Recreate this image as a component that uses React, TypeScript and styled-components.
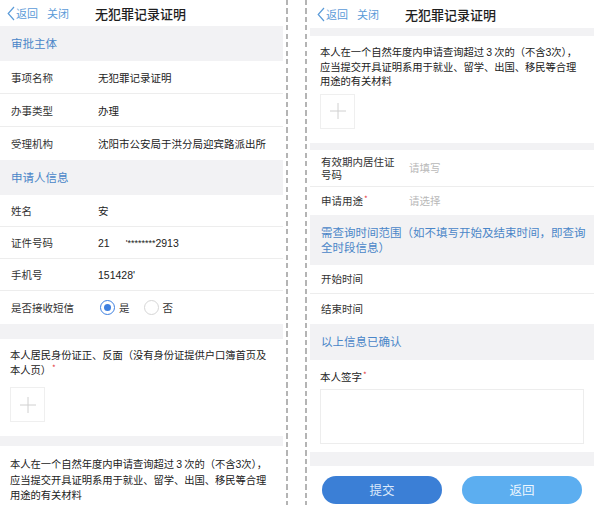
import React from "react";
import styled, { createGlobalStyle } from "styled-components";

const GlobalStyle = createGlobalStyle`
    html, body {
        margin: 0;
        padding: 0;
        background: #fff;
        overflow: hidden;
    }
    body {
        font-family: "Noto Sans CJK SC", "Noto Sans", sans-serif;
        color: #333;
    }
    * {
        box-sizing: border-box;
    }
`;

const grey = "#f2f2f4";
const blue = "#4a86c8";

const Page = styled.div`
    width: 594px;
    height: 505px;
    display: flex;
    overflow: hidden;
`;

const Phone = styled.div<{ $width: number }>`
    width: ${({ $width }) => $width}px;
    flex-shrink: 0;
    display: flex;
    flex-direction: column;
    background: #fff;
`;

const Divider = styled.div`
    width: 27px;
    flex-shrink: 0;
    display: flex;
    justify-content: space-between;
    padding: 0 3px 0 3px;
`;

const DashLine = styled.div`
    width: 2px;
    height: 100%;
    background: repeating-linear-gradient(
        to bottom,
        #b4b4b4 0,
        #b4b4b4 5px,
        transparent 5px,
        transparent 8.5px
    );
`;

const NavBar = styled.div<{ $height: number; $pad: number }>`
    height: ${({ $height }) => $height}px;
    display: flex;
    align-items: center;
    padding-left: ${({ $pad }) => $pad}px;
    flex-shrink: 0;
`;

const NavLink = styled.span`
    font-size: 11px;
    color: #5b9bd8;
    display: flex;
    align-items: center;
`;

const NavTitle = styled.span`
    font-size: 13px;
    color: #1e1e1e;
    font-weight: 500;
`;

const SectionHeader = styled.div<{ $height: number }>`
    height: ${({ $height }) => $height}px;
    background: ${grey};
    color: ${blue};
    font-size: 11.5px;
    line-height: 15px;
    padding: 0 8px 0 11px;
    display: flex;
    align-items: center;
    flex-shrink: 0;
`;

const Spacer = styled.div<{ $height: number }>`
    height: ${({ $height }) => $height}px;
    background: ${grey};
    flex-shrink: 0;
`;

const Row = styled.div<{ $height: number; $last?: boolean }>`
    height: ${({ $height }) => $height}px;
    display: flex;
    align-items: center;
    padding-left: 11px;
    border-bottom: ${({ $last }) => ($last ? "none" : "1px solid #ededed")};
    flex-shrink: 0;
`;

const Label = styled.div<{ $width: number }>`
    width: ${({ $width }) => $width}px;
    flex-shrink: 0;
    font-size: 10.5px;
    line-height: 13px;
    color: #333;
    padding-right: 10px;
`;

const Value = styled.div<{ $placeholder?: boolean }>`
    font-size: 10.5px;
    color: ${({ $placeholder }) => ($placeholder ? "#b9b9b9" : "#222")};
    white-space: nowrap;
    display: flex;
    align-items: center;
`;

const Num = styled.span`
    font-family: "Liberation Sans", Arial, sans-serif;
    font-size: 10.5px;
    color: #222;
`;

const Required = styled.span`
    color: #e4393c;
    font-size: 8px;
    position: relative;
    top: -3px;
    margin-left: 1px;
`;

const Block = styled.div<{ $pt: number; $pb: number }>`
    padding: ${({ $pt, $pb }) => `${$pt}px 10px ${$pb}px 10px`};
    flex-shrink: 0;
`;

const Paragraph = styled.div<{ $lh?: number }>`
    font-size: 10.3px;
    line-height: ${({ $lh }) => $lh ?? 15}px;
    color: #222;
    white-space: nowrap;
    letter-spacing: -0.05px;
`;

const UploadBox = styled.div<{ $mt: number }>`
    width: 35px;
    height: 35px;
    margin-top: ${({ $mt }) => $mt}px;
    border: 1px solid #efefef;
    display: flex;
    align-items: center;
    justify-content: center;
`;

const RadioGroup = styled.div`
    display: flex;
    align-items: center;
    gap: 4px;
`;

const RadioCircle = styled.span<{ $checked?: boolean }>`
    width: 15px;
    height: 15px;
    border-radius: 50%;
    border: 1.5px solid ${({ $checked }) => ($checked ? "#3d7fe0" : "#d6d6d6")};
    display: flex;
    align-items: center;
    justify-content: center;
    margin-left: ${({ $checked }) => ($checked ? "2px" : "10px")};

    &::after {
        content: "";
        width: 7px;
        height: 7px;
        border-radius: 50%;
        background: ${({ $checked }) => ($checked ? "#3d7fe0" : "transparent")};
    }
`;

const RadioText = styled.span`
    font-size: 10.5px;
    color: #333;
`;

const SignLabel = styled.div`
    font-size: 10.5px;
    color: #222;
    line-height: 14px;
`;

const SignBox = styled.div`
    margin-top: 4px;
    height: 55px;
    border: 1px solid #ededed;
`;

const ButtonBar = styled.div`
    display: flex;
    gap: 20px;
    padding: 10px 12px 0 12px;
    flex-shrink: 0;
`;

const Button = styled.div<{ $primary?: boolean }>`
    width: 120px;
    height: 28px;
    border-radius: 14px;
    background: ${({ $primary }) => ($primary ? "#3b7fd6" : "#5caef0")};
    color: ${({ $primary }) => ($primary ? "#dce9fb" : "#eef7ff")};
    font-size: 12.5px;
    display: flex;
    align-items: center;
    justify-content: center;
`;

const Chevron = () => (
    <svg width="8" height="15" viewBox="0 0 8 15" style={{ marginRight: 1 }}>
        <polyline points="7,1 1.2,7.5 7,14" fill="none" stroke="#5b9bd8" strokeWidth="1.2" />
    </svg>
);

const Plus = () => (
    <svg width="16" height="16" viewBox="0 0 16 16">
        <line x1="8" y1="0" x2="8" y2="16" stroke="#d0d0d0" strokeWidth="1" />
        <line x1="0" y1="8" x2="16" y2="8" stroke="#d0d0d0" strokeWidth="1" />
    </svg>
);

const Nav: React.FC<{ height: number; pad: number; titleGap: number }> = ({ height, pad, titleGap }) => (
    <NavBar $height={height} $pad={pad}>
        <NavLink>
            <Chevron />
            返回
        </NavLink>
        <NavLink style={{ marginLeft: 9 }}>关闭</NavLink>
        <NavTitle style={{ marginLeft: titleGap }}>无犯罪记录证明</NavTitle>
    </NavBar>
);

const limitText = (
    <>
        本人在一个自然年度内申请查询超过 <Num>3</Num> 次的（不含<Num>3</Num>次），
        <br />
        应当提交开具证明系用于就业、留学、出国、移民等合理
        <br />
        用途的有关材料
    </>
);

export default function App() {
    return (
        <>
            <GlobalStyle />
            <Page>
                <Phone $width={283}>
                    <Nav height={26} pad={7} titleGap={26} />
                    <SectionHeader $height={35}>审批主体</SectionHeader>
                    <Row $height={33}>
                        <Label $width={87}>事项名称</Label>
                        <Value>无犯罪记录证明</Value>
                    </Row>
                    <Row $height={33}>
                        <Label $width={87}>办事类型</Label>
                        <Value>办理</Value>
                    </Row>
                    <Row $height={33} $last>
                        <Label $width={87}>受理机构</Label>
                        <Value>沈阳市公安局于洪分局迎宾路派出所</Value>
                    </Row>
                    <SectionHeader $height={35}>申请人信息</SectionHeader>
                    <Row $height={32}>
                        <Label $width={87}>姓名</Label>
                        <Value>安</Value>
                    </Row>
                    <Row $height={32}>
                        <Label $width={87}>证件号码</Label>
                        <Value>
                            <Num>21</Num>
                            <Num style={{ marginLeft: 16, fontSize: 9 }}>'********</Num>
                            <Num>2913</Num>
                        </Value>
                    </Row>
                    <Row $height={32}>
                        <Label $width={87}>手机号</Label>
                        <Value>
                            <Num>151428'</Num>
                        </Value>
                    </Row>
                    <Row $height={33} $last>
                        <Label $width={87}>是否接收短信</Label>
                        <RadioGroup>
                            <RadioCircle $checked />
                            <RadioText>是</RadioText>
                            <RadioCircle />
                            <RadioText>否</RadioText>
                        </RadioGroup>
                    </Row>
                    <Spacer $height={15} />
                    <Block $pt={8} $pb={14}>
                        <Paragraph>
                            本人居民身份证正、反面（没有身份证提供户口簿首页及
                            <br />
                            本人页）<Required>*</Required>
                        </Paragraph>
                        <UploadBox $mt={9}>
                            <Plus />
                        </UploadBox>
                    </Block>
                    <Spacer $height={10} />
                    <Block $pt={10} $pb={0}>
                        <Paragraph>{limitText}</Paragraph>
                    </Block>
                </Phone>

                <Divider>
                    <DashLine />
                    <DashLine />
                </Divider>

                <Phone $width={284}>
                    <Nav height={28} pad={7} titleGap={26} />
                    <Spacer $height={8} />
                    <Block $pt={9} $pb={14}>
                        <Paragraph $lh={14.5}>{limitText}</Paragraph>
                        <UploadBox $mt={5}>
                            <Plus />
                        </UploadBox>
                    </Block>
                    <Spacer $height={7} />
                    <Row $height={37}>
                        <Label $width={88}>有效期内居住证号码</Label>
                        <Value $placeholder>请填写</Value>
                    </Row>
                    <Row $height={28} $last>
                        <Label $width={88}>
                            申请用途<Required>*</Required>
                        </Label>
                        <Value $placeholder>请选择</Value>
                    </Row>
                    <SectionHeader $height={50}>
                        需查询时间范围（如不填写开始及结束时间，即查询全时段信息）
                    </SectionHeader>
                    <Row $height={29}>
                        <Label $width={88}>开始时间</Label>
                    </Row>
                    <Row $height={30} $last>
                        <Label $width={88}>结束时间</Label>
                    </Row>
                    <SectionHeader $height={36}>以上信息已确认</SectionHeader>
                    <Block $pt={10} $pb={8}>
                        <SignLabel>
                            本人签字<Required>*</Required>
                        </SignLabel>
                        <SignBox />
                    </Block>
                    <Spacer $height={14} />
                    <ButtonBar>
                        <Button $primary>提交</Button>
                        <Button>返回</Button>
                    </ButtonBar>
                </Phone>
            </Page>
        </>
    );
}
